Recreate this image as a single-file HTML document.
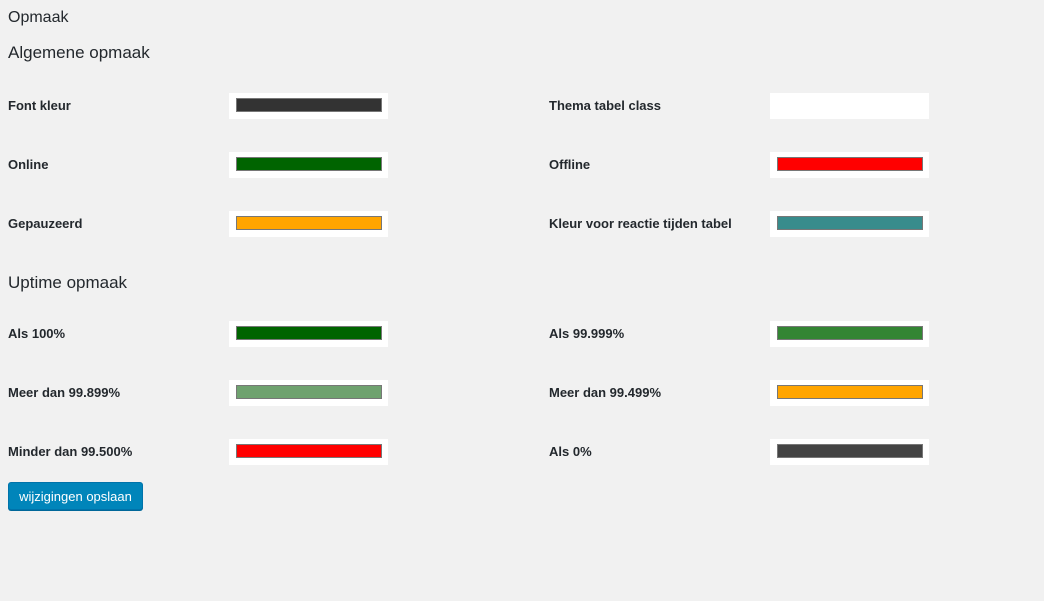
<!DOCTYPE html>
<html><head><meta charset="utf-8"><style>
body{margin:0;width:1044px;height:601px;background:#f1f1f1;font-family:"Liberation Sans",sans-serif;color:#23282d;position:relative;overflow:hidden}
.t{position:absolute;white-space:nowrap}
.h1{font-size:16px;left:8px}
.h2{font-size:17px;left:8px}
.l{font-size:13px;font-weight:bold;color:#23282d}
.b{position:absolute;width:159px;height:26px;background:#fff}
.b i{position:absolute;left:7px;top:5px;width:144px;height:12px;border:1px solid #777}
.btn{position:absolute;left:8px;top:482px;width:133px;height:26px;background:#0085ba;border:1px solid #0073aa;border-radius:3px;color:#fff;font-size:13px;line-height:27px;text-align:center;box-shadow:0 1px 0 #006799}
</style></head><body>
<div class="t h1" style="top:9px">Opmaak</div>
<div class="t h2" style="top:43px">Algemene opmaak</div>
<div class="t h2" style="top:273px">Uptime opmaak</div>

<div class="t l" style="left:8px;top:98px">Font kleur</div>
<div class="b" style="left:229px;top:93px"><i style="background:#333"></i></div>
<div class="t l" style="left:549px;top:98px">Thema tabel class</div>
<div class="b" style="left:770px;top:93px"></div>

<div class="t l" style="left:8px;top:157px">Online</div>
<div class="b" style="left:229px;top:152px"><i style="background:#006400"></i></div>
<div class="t l" style="left:549px;top:157px">Offline</div>
<div class="b" style="left:770px;top:152px"><i style="background:#ff0000"></i></div>

<div class="t l" style="left:8px;top:216px">Gepauzeerd</div>
<div class="b" style="left:229px;top:211px"><i style="background:#ffa500"></i></div>
<div class="t l" style="left:549px;top:216px">Kleur voor reactie tijden tabel</div>
<div class="b" style="left:770px;top:211px"><i style="background:#388c8c"></i></div>

<div class="t l" style="left:8px;top:326px">Als 100%</div>
<div class="b" style="left:229px;top:321px"><i style="background:#006400"></i></div>
<div class="t l" style="left:549px;top:326px">Als 99.999%</div>
<div class="b" style="left:770px;top:321px"><i style="background:#338533"></i></div>

<div class="t l" style="left:8px;top:385px">Meer dan 99.899%</div>
<div class="b" style="left:229px;top:380px"><i style="background:#6fa26f"></i></div>
<div class="t l" style="left:549px;top:385px">Meer dan 99.499%</div>
<div class="b" style="left:770px;top:380px"><i style="background:#ffa500"></i></div>

<div class="t l" style="left:8px;top:444px">Minder dan 99.500%</div>
<div class="b" style="left:229px;top:439px"><i style="background:#ff0000"></i></div>
<div class="t l" style="left:549px;top:444px">Als 0%</div>
<div class="b" style="left:770px;top:439px"><i style="background:#444"></i></div>

<div class="btn">wijzigingen opslaan</div>
</body></html>
